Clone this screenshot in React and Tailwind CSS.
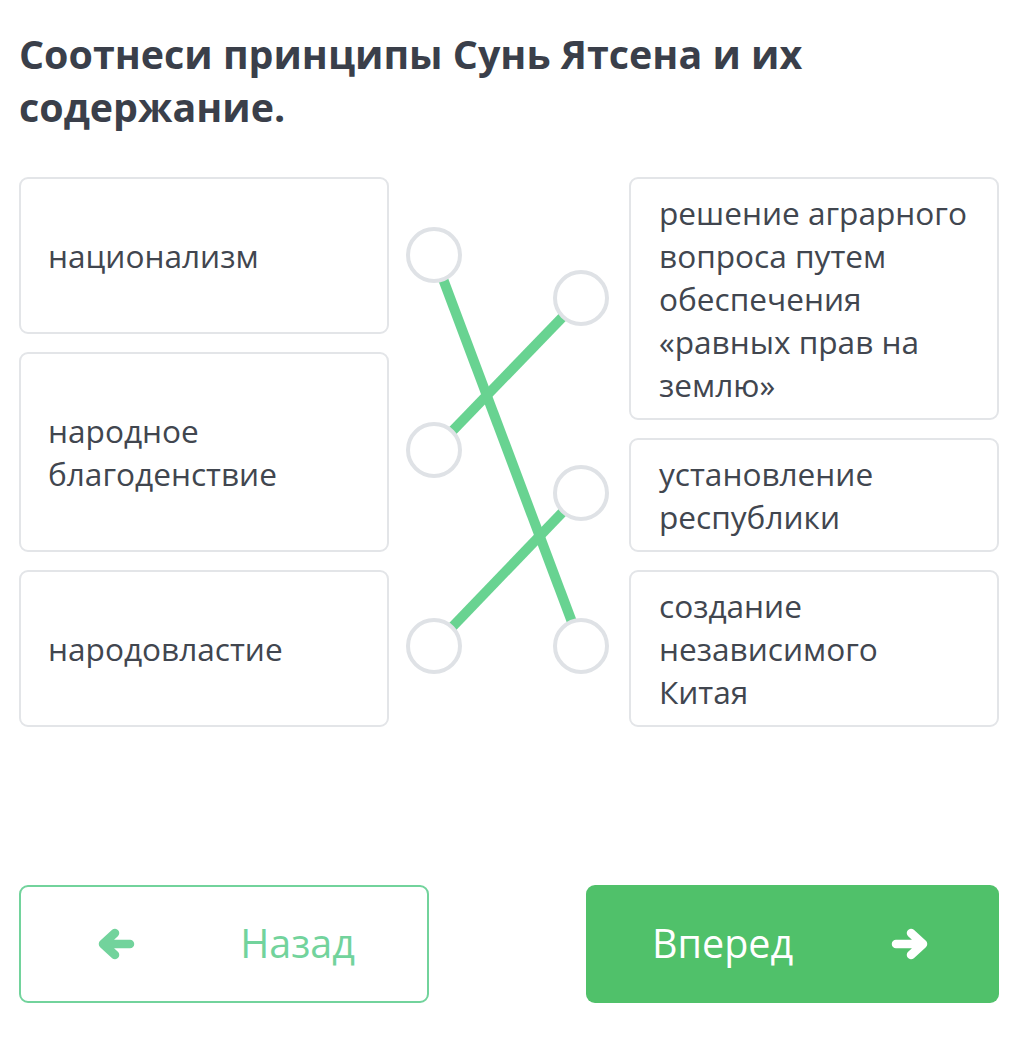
import React from "react";

const font = { fontFamily: '"Open Sans", "Noto Sans", sans-serif' };

function LeftCard({ lines }) {
  return (
    <div className="rounded-[9px] border-2 border-[#e3e5e8] bg-white px-[27px] py-[55px] text-[31.6px] leading-[43px] text-[#41464f]">
      {lines.map((l, i) => (
        <div key={i} className="whitespace-nowrap">{l}</div>
      ))}
    </div>
  );
}

function RightCard({ lines }) {
  return (
    <div className="rounded-[9px] border-2 border-[#e3e5e8] bg-white px-[28px] py-[12px] text-[31.6px] leading-[43px] text-[#41464f]">
      {lines.map((l, i) => (
        <div key={i} className="whitespace-nowrap">{l}</div>
      ))}
    </div>
  );
}

function Arrow({ dir, className }) {
  const d = dir === "right" ? "M6 16 H33 M21 5 L33 16 L21 27" : "M34 16 H7 M19 5 L7 16 L19 27";
  return (
    <svg className={className} width="40" height="32" viewBox="0 0 40 32" fill="none">
      <path d={d} stroke="currentColor" strokeWidth="8.5" strokeLinecap="round" strokeLinejoin="round" />
    </svg>
  );
}

export default function App() {
  const L = [78, 273, 469];
  const R = [121, 316, 469];
  const lx = 45;
  const rx = 192;
  const links = [
    [0, 2],
    [1, 0],
    [2, 1],
  ];
  return (
    <div className="min-h-[1039px] w-[1031px] bg-white" style={font}>
      <div className="pl-[19px] pr-[32px] pt-[28px]">
        <h1 className="text-[39.4px] font-bold leading-[53px] text-[#3a3f4a]">
          Соотнеси принципы Сунь Ятсена и их
          <br />
          содержание.
        </h1>

        <div className="mt-[43px] flex">
          <div className="flex w-[370px] flex-col gap-[18px]">
            <LeftCard lines={["национализм"]} />
            <LeftCard lines={["народное", "благоденствие"]} />
            <LeftCard lines={["народовластие"]} />
          </div>
          <div className="relative w-[240px]">
            <svg className="absolute left-0 top-0" width="240" height="550" viewBox="0 0 240 550">
              {links.map(([a, b], i) => (
                <line key={i} x1={lx} y1={L[a]} x2={rx} y2={R[b]} stroke="#68d391" strokeWidth="10" />
              ))}
              {L.map((y, i) => (
                <circle key={"l" + i} cx={lx} cy={y} r="26" fill="white" stroke="#dfe2e6" strokeWidth="4" />
              ))}
              {R.map((y, i) => (
                <circle key={"r" + i} cx={rx} cy={y} r="26" fill="white" stroke="#dfe2e6" strokeWidth="4" />
              ))}
            </svg>
          </div>
          <div className="flex w-[370px] flex-col gap-[18px]">
            <RightCard lines={["решение аграрного", "вопроса путем", "обеспечения", "«равных прав на", "землю»"]} />
            <RightCard lines={["установление", "республики"]} />
            <RightCard lines={["создание", "независимого", "Китая"]} />
          </div>
        </div>

        <div className="mt-[158px] flex justify-between">
          <button className="flex h-[118px] w-[410px] items-center justify-between rounded-[9px] border-2 border-[#72d39c] bg-white pl-[75px] pr-[72px] text-[39.5px] text-[#72d39c]">
            <Arrow dir="left" />
            <span>Назад</span>
          </button>
          <button className="flex h-[118px] w-[413px] items-center justify-between rounded-[9px] bg-[#50c16a] pl-[66px] pr-[69px] text-[39.5px] text-white">
            <span>Вперед</span>
            <Arrow dir="right" />
          </button>
        </div>
      </div>
    </div>
  );
}
